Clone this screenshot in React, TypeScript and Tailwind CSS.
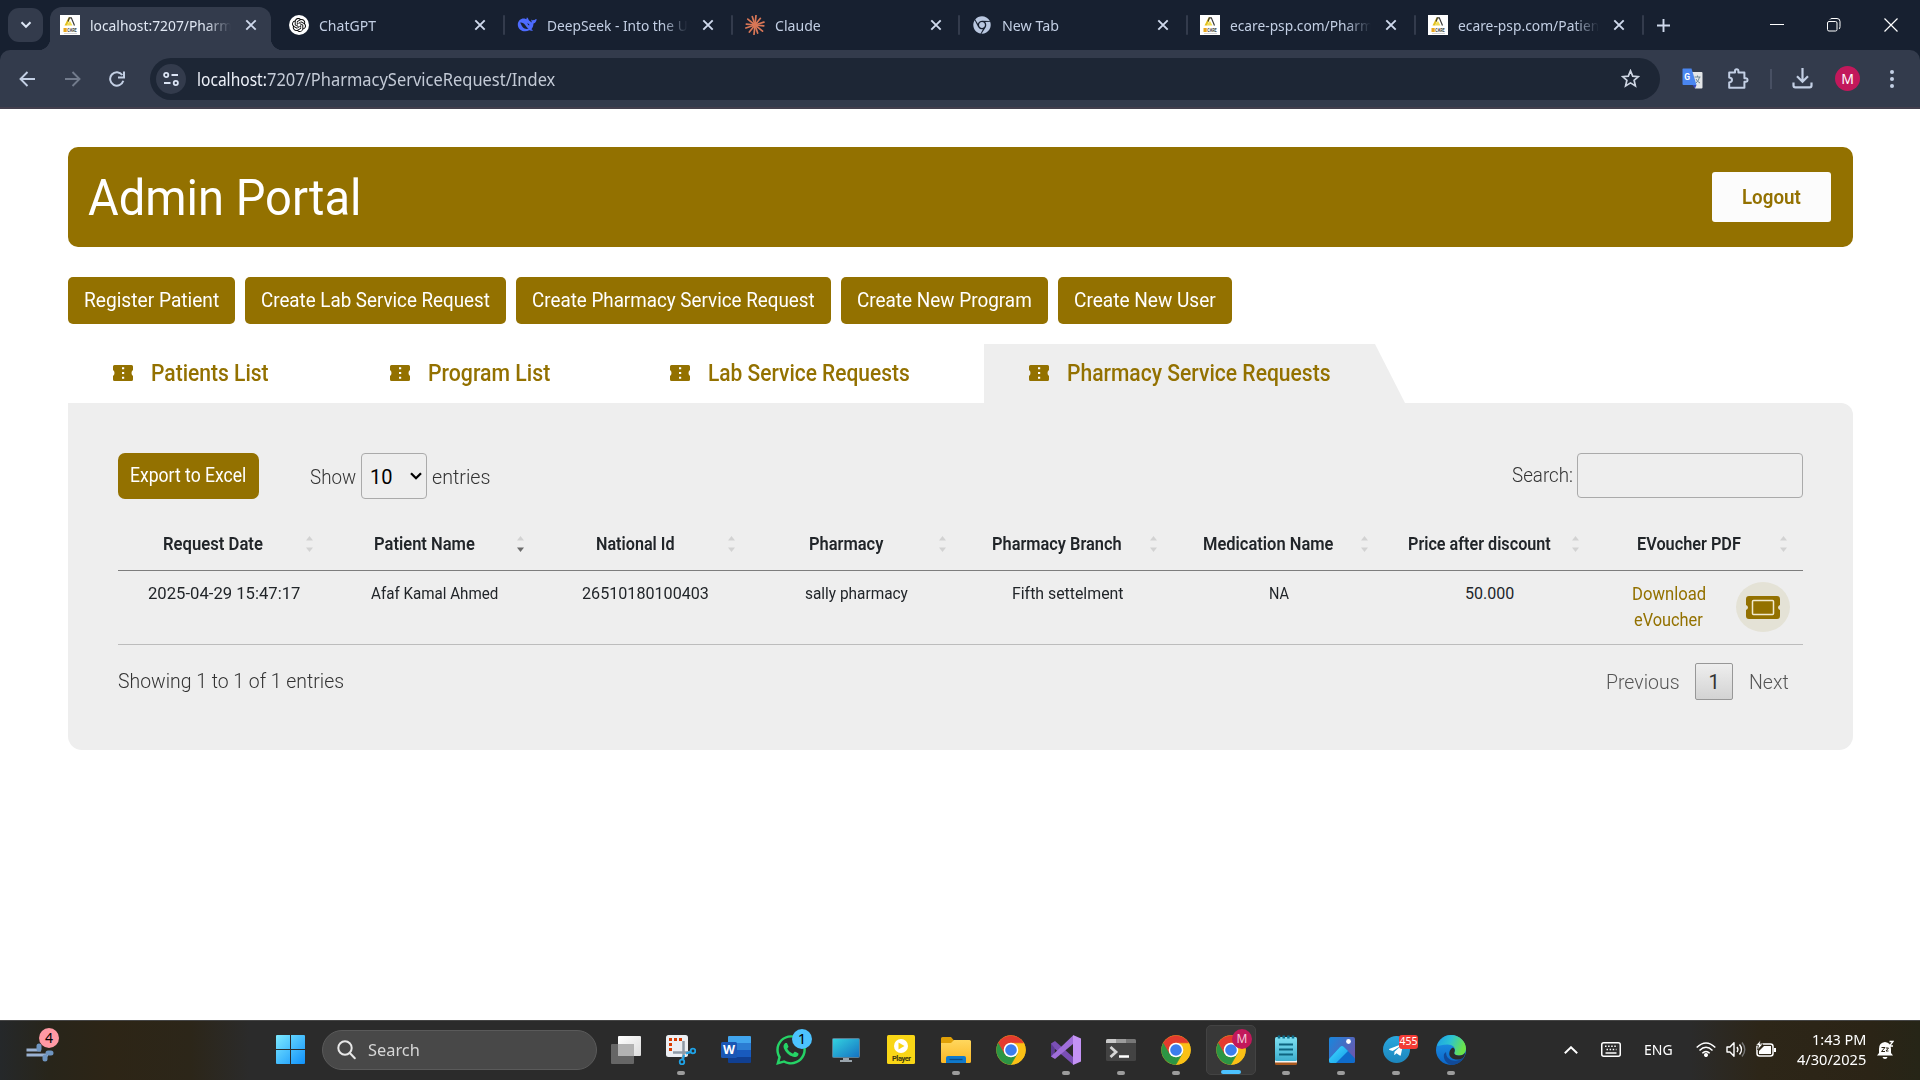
import { useLayoutEffect, useRef, useState, type ReactNode } from "react";
import { SiOpenai } from "react-icons/si";
import { FaWhatsapp, FaTelegramPlane, FaChrome } from "react-icons/fa";

/* Text condensed or widened horizontally to a given measure. */
function Fit({ w, children, className = "" }: { w: number; children: string; className?: string }) {
  const ref = useRef<HTMLSpanElement>(null);
  const [k, setK] = useState(1);
  useLayoutEffect(() => {
    if (ref.current) setK(w / ref.current.offsetWidth);
  }, [w, children]);
  return (
    <span className={`inline-block shrink-0 whitespace-nowrap text-left ${className}`} style={{ width: w }}>
      <span ref={ref} className="inline-block origin-left" style={{ transform: `scaleX(${k})` }}>
        {children}
      </span>
    </span>
  );
}

function EcareIcon() {
  return (
    <svg width="20" height="20" viewBox="0 0 20 20">
      <rect width="20" height="20" fill="#fff" />
      <path d="M4.500 10.500 8.500 2.500h2L7 10.500z" fill="#e3c11c" />
      <path d="M6.500 10.500h6L10 6z" fill="#f0dc55" />
      <path d="M8 6.500 9.300 2.800h2l3.200 7.700" fill="none" stroke="#3a3a3a" strokeWidth="1.200" />
      <rect x="3.500" y="13" width="3.200" height="4" fill="#e8a51c" />
      <text x="7.200" y="16.900" fontSize="4.600" fontWeight="700" fill="#444" fontFamily="Roboto" textLength="9.500" lengthAdjust="spacingAndGlyphs">CARE</text>
      <path d="M4 18.500h13" stroke="#bbb" strokeWidth=".6" />
    </svg>
  );
}

function GptIcon() {
  return (
    <span className="flex size-5 items-center justify-center rounded-full bg-white text-black">
      <SiOpenai size={14} />
    </span>
  );
}

function DeepSeekIcon() {
  return (
    <svg width="20" height="20" viewBox="0 0 20 20">
      <path
        d="M.8 9.2C1 5.6 3.6 3.4 6.6 3.4c1.2 0 1.9.4 2.700.9.500-.6.200-1.300.600-1.700 1 .3 1.500 1.400 1.800 2.400.8 1.200 2.200 1.500 3 2.600.2-1.300-.8-2.200-.3-3.200.8 1 1.800.9 2.600.7.900-.300 1.600-1.500 2.600-1.100-.100 2.500-1.200 4-3.100 4.500-.100 2.500-.800 4.300-2.100 5.800.5.500 1.200.500 1.500 1.100-1 .7-2.500.4-3.600-.1C7.500 18.100.500 15.200.8 9.200z"
        fill="#4d6bfe"
      />
      <path d="M3.200 7.600c2.200-.200 3.800.900 5.100 2.600 1.100 1.400 1.800 2.700 3.300 3.300-2 1-4.200.4-5.800-1.200C4.400 10.900 4 9 3.200 7.600z" fill="#172030" />
      <path d="M10.300 8.200c1.200.2 2 .9 2.200 2.100-1 .3-1.700-.7-2.200-2.100z" fill="#172030" />
    </svg>
  );
}

function ClaudeIcon() {
  const rays = [9.6, 8.6, 9.4, 8.8, 9.7, 8.5, 9.5, 9, 9.6, 8.7, 9.3, 8.9];
  return (
    <svg width="20" height="20" viewBox="-10 -10 20 20" stroke="#d97757" strokeWidth="1.7" strokeLinecap="round">
      {rays.map((r, i) => (
        <path key={i} d={`M0 0V${-r}`} transform={`rotate(${i * 30 + 6 + (i % 3) * 3})`} />
      ))}
    </svg>
  );
}

function Close() {
  return (
    <svg width="12" height="12" viewBox="0 0 12 12" stroke="#cfd9ec" strokeWidth="1.9">
      <path d="m1.300 1.300 9.400 9.400M10.700 1.300l-9.400 9.400" />
    </svg>
  );
}

const tabs: { icon: ReactNode; title: string; w: number; fade: boolean }[] = [
  { icon: <GptIcon />, title: "ChatGPT", w: 57, fade: false },
  { icon: <DeepSeekIcon />, title: "DeepSeek - Into the U", w: 141, fade: true },
  { icon: <ClaudeIcon />, title: "Claude", w: 46, fade: false },
  { icon: <FaChrome size={18} color="#b9c7e0" />, title: "New Tab", w: 57, fade: false },
  { icon: <EcareIcon />, title: "ecare-psp.com/Pharm", w: 143, fade: true },
  { icon: <EcareIcon />, title: "ecare-psp.com/Patien", w: 141, fade: true },
];

function TabText({ title, w, fade }: { title: string; w: number; fade: boolean }) {
  return (
    <span
      className={
        fade
          ? "ml-[10px] block w-[141px] overflow-hidden [mask-image:linear-gradient(to_right,black_82%,transparent_100%)]"
          : "ml-[10px] block w-[141px] overflow-hidden"
      }
    >
      <Fit w={w}>{title}</Fit>
    </span>
  );
}

function TabStrip() {
  return (
    <div className="flex h-[50px] items-start bg-[#172030] text-[15px] leading-[20px] text-[#c3cfe4]">
      <button className="mt-2 ml-2 flex h-[34px] w-[35px] items-center justify-center rounded-[11px] bg-[#333b4c]">
        <svg width="12" height="8" viewBox="0 0 12 8" fill="none" stroke="#dde6f5" strokeWidth="2">
          <path d="m1.500 1.200 4.500 4.600 4.500-4.600" />
        </svg>
      </button>
      <div className="relative mt-[7px] ml-[7px] flex h-[43px] w-[221px] items-start rounded-t-[12px] bg-[#333b4c] pt-2 pl-[10px] text-[#e1e8f4]">
        <EcareIcon />
        <TabText title="localhost:7207/Pharm" w={142} fade />
        <span className="mt-1 ml-[14px]">
          <Close />
        </span>
        <span className="absolute bottom-0 -left-3 size-3 bg-[radial-gradient(circle_at_0_0,transparent_12px,#333b4c_12.5px)]" />
        <span className="absolute -right-3 bottom-0 size-3 bg-[radial-gradient(circle_at_100%_0,transparent_12px,#333b4c_12.5px)]" />
      </div>
      <div className="ml-[6px] flex">
        {tabs.map((t, i) => (
          <div key={i} className="flex h-[50px] w-[227.8px] items-center pl-3">
            <span className="flex w-5 shrink-0 justify-center">{t.icon}</span>
            <TabText {...t} />
            <span className="ml-[14px]">
              <Close />
            </span>
            <span className="ml-[16.8px] h-5 w-[2px] rounded bg-[#333b4c]" />
          </div>
        ))}
      </div>
      <svg className="mt-[19px] ml-[13px]" width="13" height="13" viewBox="0 0 13 13" stroke="#cfd9ec" strokeWidth="1.900">
        <path d="M6.500 0v13M0 6.500h13" />
      </svg>
      <div className="mr-[22px] ml-auto flex h-[50px] items-center">
        <span className="-mt-[2px] h-[1px] w-[14px] bg-white" />
        <svg className="ml-[43px] -mt-px" width="14" height="14" viewBox="0 0 14 14" fill="none" stroke="#fff">
          <rect x=".5" y="3.500" width="9.500" height="9.500" rx="1.500" />
          <path d="M3 1.500Q3.500.500 5 .5h5Q13 .5 13 3.500v5Q13 10.500 12 11" />
        </svg>
        <svg className="ml-[43px] -mt-px" width="14" height="14" viewBox="0 0 14 14" stroke="#fff" strokeWidth="1.200">
          <path d="m.5.500 13 13M13.500.500l-13 13" />
        </svg>
      </div>
    </div>
  );
}

function Toolbar() {
  return (
    <div className="bg-[#172030]">
      <div className="flex h-[59px] items-center rounded-t-[10px] border-b-2 border-[#433f4d] bg-[#333b4c] pl-[19px]">
        <svg width="16" height="16" viewBox="0 0 16 16" fill="none" stroke="#c3cfe4" strokeWidth="1.900">
          <path d="M16 8H1.500M8.500 1 1.500 8l7 7" />
        </svg>
        <svg className="ml-[30px]" width="16" height="16" viewBox="0 0 16 16" fill="none" stroke="#727b8c" strokeWidth="1.900">
          <path d="M0 8h14.500M7.500 1l7 7-7 7" />
        </svg>
        <svg className="ml-[28px]" width="16" height="16" viewBox="0 0 16 16" fill="none" stroke="#c3cfe4" strokeWidth="2">
          <path d="M14.300 9.800A6.700 6.700 0 1 1 13.300 4M15 .5v6H9" />
        </svg>
        <div className="ml-[25px] flex h-[42px] w-[1510px] items-center rounded-full bg-[#1d2635] pl-[6px]">
          <span className="flex size-[30px] items-center justify-center rounded-full bg-[#333b4c]">
            <svg width="16" height="16" viewBox="0 0 16 16" fill="none" stroke="#dbe4f4" strokeWidth="1.800">
              <circle cx="3.200" cy="4" r="2.100" />
              <path d="M8.500 4H15M1 12h6.500" />
              <circle cx="12.800" cy="12" r="2.100" />
            </svg>
          </span>
          <span className="ml-[11px] text-[18px] leading-6 text-[#c3cad6]">
            <Fit w={70} className="text-[#eef2fa]">localhost:</Fit>
            <Fit w={288}>7207/PharmacyServiceRequest/Index</Fit>
          </span>
          <svg className="mr-[20px] ml-auto" width="19" height="19" viewBox="0 0 19 19" fill="none" stroke="#cdd5e2" strokeWidth="1.700">
            <path d="m9.500 1.800 2.200 5.300 5.700.5-4.300 3.700 1.300 5.600-4.900-3-4.900 3 1.300-5.600L1.600 7.600l5.700-.5z" />
          </svg>
        </div>
        <svg className="ml-[22px]" width="21" height="21" viewBox="0 0 21 21">
          <path d="M9 4h10.500q1 0 1 1v14.500q0 1-1 1H13z" fill="#e4e6e8" />
          <path d="M1 .5h8.500L14.500 17H1.500Q.5 17 .5 16V1z" fill="#4a86f0" />
          <path d="m10.500 17 2.500 3.500 1.500-3.500z" fill="#3747b8" />
          <path d="M12.500 9h6M15.500 7.500V9M17.500 9q-.5 3.500-3.500 6M14 11q1 2.500 4 4" stroke="#6f8794" fill="none" />
          <text x="2.200" y="11.500" fontSize="8.500" fontWeight="700" fill="#fff" fontFamily="Roboto">G</text>
        </svg>
        <svg className="ml-[24px]" width="22" height="22" viewBox="0 0 22 22" fill="none" stroke="#c3cfe4" strokeWidth="2">
          <path d="M2.200 4.500H8V3q0-1.800 1.700-1.800T11.400 3v1.500h6v5.800H19q1.600.1 1.600 1.700T19 13.700h-1.600v6.100H2.200v-5.300Q5 14 5 12T2.200 9.600z" strokeLinejoin="round" />
        </svg>
        <span className="ml-[21px] h-5 w-[2px] bg-[#485063]" />
        <svg className="ml-5" width="21" height="21" viewBox="0 0 21 21" fill="none" stroke="#c3cfe4" strokeWidth="2.200">
          <path d="M10.500 0v13.500M5 8.200l5.500 5.500L16 8.200M1.500 14.500v3q0 1.800 1.800 1.800h14.400q1.800 0 1.800-1.800v-3" />
        </svg>
        <span className="ml-[22px] flex size-[25px] items-center justify-center rounded-full bg-[#c2185b] text-[14px] text-white">M</span>
        <span className="ml-[30px] flex flex-col gap-[3px]">
          <i className="size-1 rounded-full bg-[#c3cfe4]" />
          <i className="size-1 rounded-full bg-[#c3cfe4]" />
          <i className="size-1 rounded-full bg-[#c3cfe4]" />
        </span>
      </div>
    </div>
  );
}

const actions: [string, number, string][] = [
  ["Register Patient", 135, "w-[167px]"],
  ["Create Lab Service Request", 229, "w-[261px]"],
  ["Create Pharmacy Service Request", 283, "w-[315px]"],
  ["Create New Program", 175, "w-[207px]"],
  ["Create New User", 142, "w-[174px]"],
];

const sections: [string, number, string][] = [
  ["Patients List", 118, "w-[277px]"],
  ["Program List", 122, "w-[280px]"],
  ["Lab Service Requests", 202, "w-[359px]"],
  ["Pharmacy Service Requests", 264, "w-[421px] bg-[#eeeeee] [clip-path:polygon(0_0,391px_0,100%_100%,0_100%)]"],
];

function TabTicket() {
  return (
    <svg width="20" height="16" viewBox="0 0 20 16">
      <path d="M1.500 0h17Q20 0 20 1.500V5q-1.500.8-1.500 3T20 11v3.500q0 1.500-1.500 1.500h-17Q0 16 0 14.500V11q1.500-.8 1.500-3T0 5V1.500Q0 0 1.500 0z" fill="#937100" />
      <path d="M9 2.300h2.200v2H9zM9 7h2.200v2H9zM9 11.700h2.200v2H9z" fill="#fff" />
    </svg>
  );
}

const columns: { head: string; hw: number; cell: string; cw: number }[] = [
  { head: "Request Date", hw: 100, cell: "2025-04-29 15:47:17", cw: 152 },
  { head: "Patient Name", hw: 101, cell: "Afaf Kamal Ahmed", cw: 127 },
  { head: "National Id", hw: 79, cell: "26510180100403", cw: 127 },
  { head: "Pharmacy", hw: 74, cell: "sally pharmacy", cw: 103 },
  { head: "Pharmacy Branch", hw: 130, cell: "Fifth settelment", cw: 111 },
  { head: "Medication Name", hw: 130, cell: "NA", cw: 20 },
  { head: "Price after discount", hw: 143, cell: "50.000", cw: 49 },
  { head: "EVoucher PDF", hw: 104, cell: "", cw: 0 },
];

const grid = "grid grid-cols-[211px_211px_211px_211px_211px_211px_211px_208px]";

function Page() {
  return (
    <main className="h-[911px] bg-white px-[68px] pt-[38px] font-['Roboto',sans-serif] text-[20px]">
      <header className="flex h-[100px] w-[1785px] items-center justify-between rounded-[10px] bg-[#937100] pr-[22px] pl-[20px] text-white">
        <Fit w={273} className="pt-[2px] text-[50px] leading-none">Admin Portal</Fit>
        <button className="flex h-[50px] w-[119px] items-center justify-center rounded-[3px] bg-[#fcfcfc] text-[#937100]">
          <Fit w={59} className="font-semibold">Logout</Fit>
        </button>
      </header>
      <div className="mt-[30px] flex gap-[10px] text-white">
        {actions.map(([t, w, c]) => (
          <button key={t} className={`flex h-[47px] items-center justify-center rounded-[5px] bg-[#937100] pb-[2px] ${c}`}>
            <Fit w={w}>{t}</Fit>
          </button>
        ))}
      </div>
      <nav className="mt-[20px] flex h-[59px] text-[23px] font-medium text-[#937100]">
        {sections.map(([t, w, c]) => (
          <div key={t} className={`flex items-center gap-[18px] pl-[45px] ${c}`}>
            <span className="-mt-[2px] flex">
              <TabTicket />
            </span>
            <Fit w={w} className="pt-[2px]">{t}</Fit>
          </div>
        ))}
      </nav>
      <section className="h-[347px] w-[1785px] rounded-tr-[12px] rounded-b-[14px] bg-[#eeeeee] px-[50px] pt-[50px] text-[#333]">
        <div className="flex h-[46px] items-center">
          <button className="flex h-[46px] w-[141px] items-center justify-center rounded-[7px] bg-[#937100] pr-[1px] pb-[2px] text-white">
            <Fit w={116}>Export to Excel</Fit>
          </button>
          <Fit w={46} className="ml-[51px] pt-[2px] font-light">Show</Fit>
          <div className="ml-[5px] flex h-[46px] w-[66px] items-center rounded-[4px] border border-[#aaa] pl-[8px] text-black">
            <Fit w={22} className="pt-[2px]">10</Fit>
            <svg className="ml-[18px]" width="12" height="8" viewBox="0 0 12 8" fill="none" stroke="#000" strokeWidth="2.300">
              <path d="m1 1.200 5 5 5-5" />
            </svg>
          </div>
          <Fit w={58} className="ml-[5px] pt-[2px] font-light">entries</Fit>
          <Fit w={61} className="ml-auto pb-[2px] font-light">Search:</Fit>
          <div className="ml-[4px] h-[45px] w-[226px] self-start rounded-[4px] border border-[#aaa]" />
        </div>
        <div className={`mt-[18px] h-[54px] border-b border-[#7d7d7d] text-[18px] font-semibold text-[#212529] ${grid}`}>
          {columns.map((c, i) => (
            <div key={c.head} className="flex items-center pl-[2px]">
              <span className="flex grow justify-center">
                <Fit w={c.hw}>{c.head}</Fit>
              </span>
              <svg className="mt-[1px] mr-[16px]" width="7" height="16" viewBox="0 0 7 16">
                <path d="M3.500 0 7 4.500H0z" fill="#d2d2d2" />
                <path d="M0 11.500h7L3.500 16z" fill={i === 1 ? "#6b6b6b" : "#d2d2d2"} />
              </svg>
            </div>
          ))}
        </div>
        <div className={`h-[74px] border-b border-[#bcbcbc] text-[16px] leading-[21px] text-[#212529] ${grid}`}>
          {columns.slice(0, 7).map((c) => (
            <div key={c.head} className="flex justify-center pt-[12px]">
              <Fit w={c.cw}>{c.cell}</Fit>
            </div>
          ))}
          <div className="flex pt-[10px] pl-[36.500px] text-[18px] leading-[26px] text-[#937100]">
            <a className="flex w-[74px] flex-col items-center">
              <Fit w={74}>Download</Fit>
              <Fit w={69}>eVoucher</Fit>
            </a>
            <span className="mt-[1px] ml-[30px] flex h-[50px] w-[54px] items-center justify-center rounded-[50%] bg-[#e4e2d6]">
              <svg width="34" height="23" viewBox="0 0 34 23">
                <path d="M3 0h28q3 0 3 3v6q-2 .7-2 2.500t2 2.500v6q0 3-3 3H3q-3 0-3-3v-6q2-.7 2-2.500T0 9V3q0-3 3-3z" fill="#937100" />
                <rect x="6.500" y="4.500" width="21" height="14" rx="1" fill="none" stroke="#f1ead0" strokeWidth="1.500" />
              </svg>
            </span>
          </div>
        </div>
        <div className="mt-[18px] flex h-[37px] items-center">
          <Fit w={226} className="pb-[2px] font-light">Showing 1 to 1 of 1 entries</Fit>
          <Fit w={74} className="ml-auto font-light text-[#555]">Previous</Fit>
          <span className="ml-[15px] flex h-[37px] w-[38px] items-center justify-center rounded-[2px] border border-[#979797] bg-gradient-to-b from-[#eeeeee] to-[#d3d3d3]">
            1
          </span>
          <Fit w={40} className="mr-[14px] ml-[16px] font-light text-[#555]">Next</Fit>
        </div>
      </section>
    </main>
  );
}

function ChromeLogo() {
  const d = "M24 13H43.050A22 22 0 0 0 4.950 13L14.470 29.500A11 11 0 0 1 24 13z";
  return (
    <svg width="30" height="30" viewBox="1 1 46 46">
      <circle cx="24" cy="24" r="22.500" fill="#fbc116" />
      <path d={d} fill="#fbc116" transform="rotate(120 24 24)" stroke="#fbc116" />
      <path d={d} fill="#2c9544" transform="rotate(240 24 24)" stroke="#2c9544" />
      <path d={d} fill="#e33b2e" stroke="#e33b2e" />
      <circle cx="24" cy="24" r="11.200" fill="#fff" />
      <circle cx="24" cy="24" r="8.900" fill="#3b7ded" />
    </svg>
  );
}

const apps: { icon: ReactNode; mark?: "run" | "active"; badge?: ReactNode }[] = [
  {
    icon: (
      <svg width="30" height="28" viewBox="0 0 30 28">
        <defs>
          <linearGradient id="tv" x2="1" y2="1"><stop stopColor="#fff" /><stop offset="1" stopColor="#dcdcdc" /></linearGradient>
        </defs>
        <rect y="8" width="23" height="20" rx="1" fill="#666" />
        <rect x="7" width="23" height="20" rx="1" fill="url(#tv)" />
        <path d="M7 8h16v12H7z" fill="#b2b2b2" />
      </svg>
    ),
  },
  {
    mark: "run",
    icon: (
      <svg width="30" height="30" viewBox="0 0 30 30">
        <rect width="22" height="22" rx="2.500" fill="#eceff3" />
        <path d="M3 3h3v3H3zM8 3h3v3H8zM13 3h3v3h-3zM3 8h3v3H3zM3 13h3v3H3z" fill="#d83b01" />
        <path d="M17.500 6v14l-1 4M7 17.500h13l4-.5" fill="none" stroke="#8f9aa6" strokeWidth="2.500" />
        <circle cx="16" cy="27" r="2.300" fill="none" stroke="#1fa2e6" strokeWidth="1.800" />
        <circle cx="27" cy="16" r="2.300" fill="none" stroke="#1fa2e6" strokeWidth="1.800" />
        <path d="m17 25 1-5M25 17l-5 1.500" stroke="#1fa2e6" strokeWidth="2" />
      </svg>
    ),
  },
  {
    icon: (
      <svg width="30" height="28" viewBox="0 0 30 28">
        <path d="M7 1q0-1 1-1h21q1 0 1 1v6H7z" fill="#41a5ee" />
        <path d="M7 7h23v7H7z" fill="#2b7cd3" />
        <path d="M7 14h23v7H7z" fill="#185abd" />
        <path d="M7 21h23v5q0 1-1 1H8q-1 0-1-1z" fill="#103f91" />
        <rect y="6" width="16" height="16" rx="1.500" fill="#1a57b5" />
        <text x="2" y="18" fontSize="11.500" fontWeight="700" fill="#fff" fontFamily="Noto Sans" textLength="12" lengthAdjust="spacingAndGlyphs">W</text>
      </svg>
    ),
  },
  {
    icon: <FaWhatsapp size={34} color="#25d366" />,
    badge: <span className="absolute -top-[6px] left-[16px] flex size-5 items-center justify-center rounded-full bg-[#4cc2ff] text-[15px] leading-none text-black">1</span>,
  },
  {
    icon: (
      <svg width="28" height="24" viewBox="0 0 28 24">
        <defs>
          <linearGradient id="pc" x2="1" y2="1"><stop stopColor="#33d3e0" /><stop offset="1" stopColor="#1571c2" /></linearGradient>
        </defs>
        <path d="M11 19h6v3h3v2H8v-2h3z" fill="#9aa4ac" />
        <rect x=".5" y=".5" width="27" height="19" rx="1" fill="url(#pc)" stroke="#5c7d91" />
      </svg>
    ),
  },
  {
    icon: (
      <svg width="28" height="29" viewBox="0 0 28 29">
        <rect width="28" height="29" rx="1.500" fill="#f9d616" />
        <circle cx="14" cy="11" r="7" fill="#fff" />
        <path d="M11.500 7.500v7l6-3.500z" fill="#f9d616" />
        <text x="5" y="25.500" fontSize="7.500" fontWeight="700" fill="#3d3610" fontFamily="Roboto" textLength="19">Player</text>
      </svg>
    ),
  },
  {
    mark: "run",
    icon: (
      <svg width="30" height="26" viewBox="0 0 30 26">
        <defs>
          <linearGradient id="fo" x2="0" y2="1"><stop stopColor="#ffd75e" /><stop offset="1" stopColor="#fbb724" /></linearGradient>
        </defs>
        <path d="M0 1.500Q0 0 1.500 0H10l3 3.500h15q2 0 2 2V10H0z" fill="#e0a007" />
        <path d="M0 6h10l3-3h15.500Q30 3 30 4.500v20Q30 26 28.500 26h-27Q0 26 0 24.500z" fill="url(#fo)" />
        <path d="M5 26v-5q0-2 2-2h16q2 0 2 2v5z" fill="#0f79cc" />
        <path d="M8.500 22.500h13" stroke="#0a4a86" strokeWidth="1.300" />
      </svg>
    ),
  },
  { icon: <ChromeLogo /> },
  {
    mark: "run",
    icon: (
      <svg width="30" height="30" viewBox="0 0 30 30">
        <path d="M0 8.500 4 6l18 16v7.500L3.500 13.500v9.500L0 21.500z" fill="#7a4fb5" />
        <path d="M0 21.500 22 .5V9L4 24z" fill="#a06fda" />
        <path d="M3.500 13v4L0 21.500v-13z" fill="#5d3b94" />
        <path d="M22 0 30 3.500v23L22 30z" fill="#c493f5" />
      </svg>
    ),
  },
  {
    mark: "run",
    icon: (
      <svg width="30" height="22" viewBox="0 0 30 22">
        <rect width="30" height="22" rx="1.500" fill="#434343" />
        <path d="M0 4V1.500Q0 0 1.500 0H10v4z" fill="#c9c9c9" />
        <path d="M10 0h10v4H10z" fill="#9b9b9b" />
        <path d="M20 0h8.500Q30 0 30 1.500V4H20z" fill="#777" />
        <path d="m4.500 8 5.500 5-5.500 5" fill="none" stroke="#d5d5d5" strokeWidth="2.800" />
        <path d="M13 17.500h10" stroke="#fff" strokeWidth="2.500" />
      </svg>
    ),
  },
  { mark: "run", icon: <ChromeLogo /> },
  {
    mark: "active",
    icon: <ChromeLogo />,
    badge: <span className="absolute -top-[6px] left-[16px] flex size-5 items-center justify-center rounded-full bg-[#c2185b] text-[12px] leading-none text-[#f3c9d9]">M</span>,
  },
  {
    mark: "run",
    icon: (
      <svg width="22" height="30" viewBox="0 0 22 30">
        <defs>
          <linearGradient id="no" x2="0" y2="1"><stop stopColor="#7fe0f2" /><stop offset="1" stopColor="#3dafcf" /></linearGradient>
        </defs>
        <path d="M0 25h22v3.500q0 1.500-1.500 1.500h-19Q0 30 0 28.500z" fill="#a8581e" />
        <path d="M0 25h22v2.500H0z" fill="#f4f4f4" />
        <rect y="2" width="22" height="24" rx="1.500" fill="url(#no)" />
        <path d="M4 .5v3M8.700.500v3M13.400.500v3M18 .5v3" stroke="#0f6f8d" strokeWidth="2.500" />
        <path d="M4 9.500h14M4 14.500h14M4 19.500h14" stroke="#0e6480" strokeWidth="2" />
      </svg>
    ),
  },
  {
    mark: "run",
    icon: (
      <svg className="ml-[2px]" width="26" height="26" viewBox="0 0 26 26">
        <defs>
          <linearGradient id="ph" x2="1" y2=".6"><stop stopColor="#1787dd" /><stop offset="1" stopColor="#6859b0" /></linearGradient>
          <linearGradient id="mt" x2="1" y2="1"><stop stopColor="#45dcff" /><stop offset="1" stopColor="#129be8" /></linearGradient>
        </defs>
        <rect width="26" height="26" rx="2" fill="url(#ph)" />
        <path d="M0 22 11 10q2-2 4 0l11 11.500V24q0 2-2 2H2q-2 0-2-2z" fill="#0f6ccb" />
        <path d="M0 22 11 10q2-2 4 0l4 4L7 26H2q-2 0-2-2z" fill="url(#mt)" />
        <circle cx="19.500" cy="4.500" r="2.400" fill="#fff" />
      </svg>
    ),
  },
  {
    mark: "run",
    icon: (
      <span className="flex size-[27px] items-center justify-center rounded-full bg-gradient-to-b from-[#2aa7de] to-[#1c86bd]">
        <FaTelegramPlane size={16} color="#fff" />
      </span>
    ),
    badge: (
      <span className="absolute top-0 left-[18px] flex h-[14px] w-[19px] items-center justify-center rounded-[3px] bg-[#f23b35] text-[10.500px] leading-none text-white">
        455
      </span>
    ),
  },
  {
    mark: "run",
    icon: (
      <svg width="30" height="30" viewBox="0 0 30 30">
        <defs>
          <linearGradient id="e1" x2="1" y2=".3"><stop stopColor="#1c9de8" /><stop offset=".5" stopColor="#2cc3d2" /><stop offset="1" stopColor="#6be34a" /></linearGradient>
          <linearGradient id="e2" x2="0" y2="1"><stop stopColor="#2098e8" /><stop offset="1" stopColor="#0b66c9" /></linearGradient>
        </defs>
        <circle cx="15" cy="15" r="15" fill="url(#e2)" />
        <path d="M10 17c0 7 6 9.500 11 8.500 3-.5 5-2 6.500-3C25 27.500 20 30 15 30 10 28 7 24 8 19z" fill="#114a98" />
        <path d="M1 11C3 4 9 0 15 0c8.500 0 15 6.500 15 13.500 0 4.500-3 7-6.500 7-4 0-6-1.500-5-3.500 1.800-4.500-2-7.500-7-7.500-5 0-8.500 1.500-10.500 1.500z" fill="url(#e1)" />
        <path d="M18.500 17c-1 2 1 3.500 5 3.500 2.500 0 4.500-1.200 5.600-3C29 21 28 23 25 24c-6 2-13-1-11.500-7 .4-2 1.500-3.500 3.500-4.500 2 1.200 2.200 3 1.500 4.500z" fill="#2b2b2b" />
      </svg>
    ),
  },
];

function Taskbar() {
  return (
    <footer className="flex h-[60px] items-center border-t border-[#454545] bg-[linear-gradient(to_right,#25282a_0,#28251a_50px,#2d2516_110px,#2c2619_190px,#2b2b2b_250px,#2b2b2b_1690px,#2d2618_1760px,#2b2416_1870px,#262517_100%)] pb-[2px] text-white">
      <span className="relative ml-[25px] w-[30px]">
        <svg width="30" height="24" viewBox="0 0 30 24" fill="none" strokeLinecap="round">
          <path d="M1.500 12H16M1.500 17H23" stroke="#9bb2d2" strokeWidth="3" strokeLinecap="butt" />
          <path d="M14 11V8M23 15l3 0M20 19v2" stroke="#6f95c0" strokeWidth="5" />
        </svg>
        <span className="absolute -top-[10px] left-[14px] flex size-5 items-center justify-center rounded-full bg-[#ff99a4] text-[14px] leading-none text-black">4</span>
      </span>
      <svg className="ml-[221px]" width="29" height="29" viewBox="0 0 29 29">
        <defs>
          <linearGradient id="win" x2="1" y2="1"><stop stopColor="#7deaff" /><stop offset="1" stopColor="#1091fb" /></linearGradient>
        </defs>
        <path d="M1 0h13v14H0V1q0-1 1-1zM15 0h13q1 0 1 1v13H15zM0 15h14v14H1q-1 0-1-1zM15 15h14v13q0 1-1 1H15z" fill="url(#win)" />
      </svg>
      <div className="ml-[17px] flex h-10 w-[275px] items-center rounded-full border border-[#5a5a5a] bg-[#484848] pl-[14px] text-[17px] text-[#d6d6d6]">
        <svg width="19" height="20" viewBox="0 0 19 20" fill="none" stroke="#e8e8e8" strokeWidth="2" strokeLinecap="round">
          <circle cx="8" cy="8" r="6.700" />
          <path d="m12.800 13 5 5.300" />
        </svg>
        <Fit w={52} className="ml-[12px]">Search</Fit>
      </div>
      <div className="ml-[4px] flex gap-[5px]">
        {apps.map((a, i) => (
          <div
            key={i}
            className={
              a.mark === "active"
                ? "flex h-[50px] w-[50px] flex-col items-center justify-between rounded-[5px] border border-[#434343] bg-[#383838] pt-[9px]"
                : "flex h-[50px] w-[50px] flex-col items-center justify-between pt-[10px]"
            }
          >
            <span className="relative flex h-[30px] w-[30px] items-center justify-center">
              {a.icon}
              {a.badge}
            </span>
            {a.mark === "run" && <i className="h-1 w-2 rounded-full bg-[#9c9c9c]" />}
            {a.mark === "active" && <i className="h-1 w-5 rounded-full bg-[#4cc2ff]" />}
          </div>
        ))}
      </div>
      <svg className="ml-[88px]" width="14" height="8" viewBox="0 0 14 8" fill="none" stroke="#fff" strokeWidth="1.900">
        <path d="m.8 7.200 6.200-6 6.200 6" />
      </svg>
      <svg className="ml-[23px]" width="20" height="15" viewBox="0 0 20 15" fill="none" stroke="#fff" strokeWidth="1.500">
        <rect x=".75" y=".75" width="18.500" height="13.500" rx="2" />
        <path d="M4 4.300h12.500M5.500 7.500h10" strokeDasharray="1.500 1.600" strokeWidth="1.600" />
        <path d="M4.500 11h11" />
      </svg>
      <Fit w={29} className="ml-[23px] text-[15px]">ENG</Fit>
      <svg className="ml-[23px]" width="20" height="15" viewBox="0 0 20 15" fill="none" stroke="#fff" strokeWidth="1.500">
        <path d="M.7 5.500Q10-3.500 19.300 5.500M3.500 8.500q6.500-6.500 13 0M6.300 11.300q3.700-3.700 7.400 0" />
        <circle cx="10" cy="13" r="1.300" fill="#fff" />
      </svg>
      <svg className="ml-[10px]" width="20" height="17" viewBox="0 0 20 17" fill="none" stroke="#fff" strokeWidth="1.400">
        <path d="M1 6h3l4-4.200v13.400L4 11H1z" strokeLinejoin="round" />
        <path d="M11 6q1.800 2.500 0 5M13.500 3.500q4 5 0 10" />
        <path d="M16 1.500q5.500 7 0 14" stroke="#777" />
      </svg>
      <svg className="-mt-[2px] ml-[10px]" width="20" height="17" viewBox="0 0 20 17">
        <rect x="1" y="4" width="16" height="12" rx="2.500" fill="none" stroke="#fff" strokeWidth="1.500" />
        <path d="M8 6h7v8H3v-3z" fill="#fff" />
        <path d="M18 8h2v4h-2z" fill="#fff" />
        <path d="M4.500 0 0 5.500h2.500L1.500 10 7 4H4z" fill="#fff" stroke="#2c2619" strokeWidth=".7" />
      </svg>
      <div className="-mt-[2px] ml-auto flex flex-col items-end text-[15px] leading-5">
        <Fit w={54}>1:43 PM</Fit>
        <Fit w={69}>4/30/2025</Fit>
      </div>
      <svg className="mr-[26px] ml-[11px]" width="17" height="20" viewBox="0 0 17 20">
        <path d="M2 9Q2 2.500 8 2q6 .5 6 7v4l2 2.500H0L2 13zM5.500 17h5q-.5 2-2.500 2t-2.500-2z" fill="#fff" />
        <path d="M4.500 7.500H8l-3.500 4H8M9 8h2.500L9 11h2.500" fill="none" stroke="#2b2416" strokeWidth="1" />
        <path d="M12.500 1.500H16l-3.500 4.500H16" fill="none" stroke="#fff" strokeWidth="1.300" />
      </svg>
    </footer>
  );
}

export default function App() {
  return (
    <div className="h-[1080px] w-[1920px] overflow-hidden bg-white font-['Noto_Sans','Open_Sans',sans-serif]">
      <TabStrip />
      <Toolbar />
      <Page />
      <Taskbar />
    </div>
  );
}
